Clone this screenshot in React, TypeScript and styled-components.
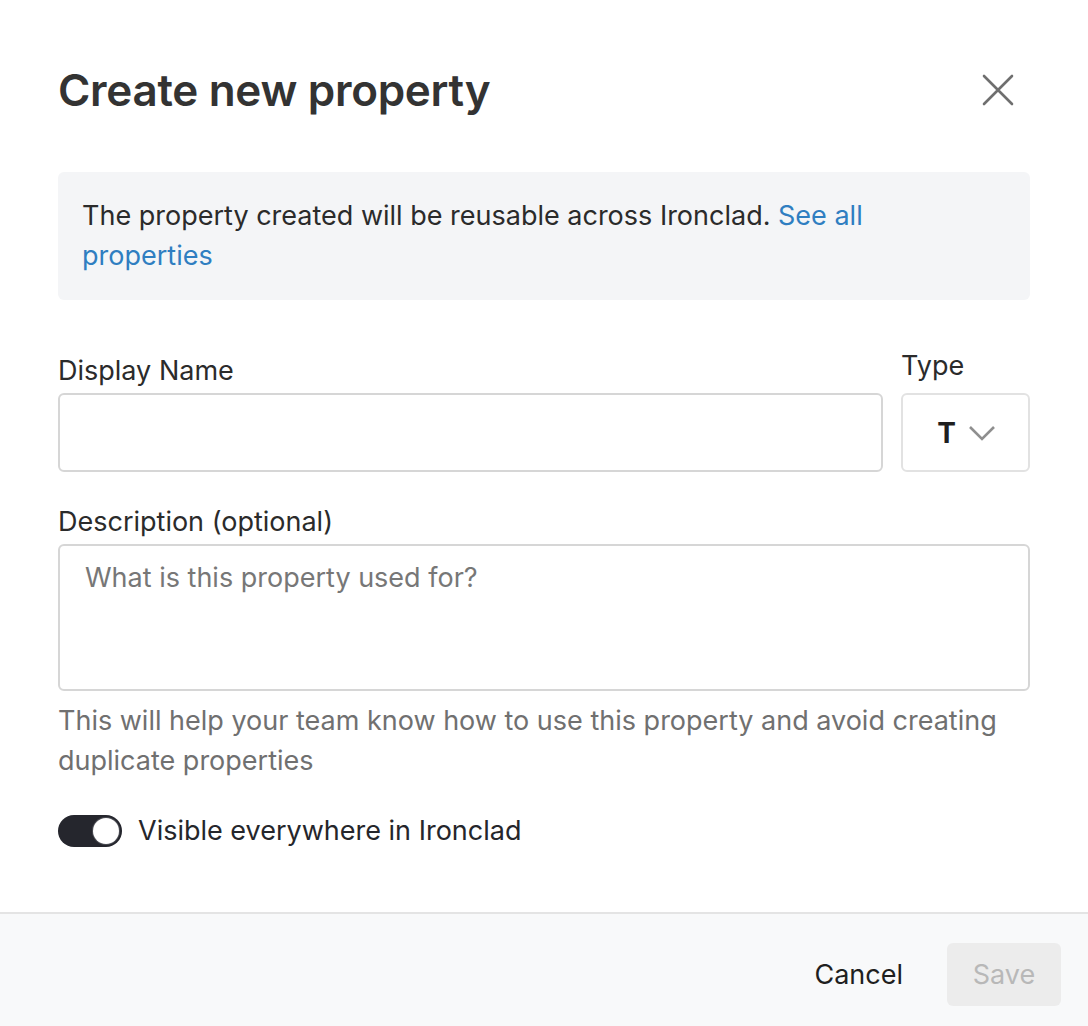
import React, { useState } from 'react';
import styled, { createGlobalStyle } from 'styled-components';

const GlobalStyle = createGlobalStyle`
  html, body {
    margin: 0;
    padding: 0;
    background: #ffffff;
  }
  body {
    font-family: Inter, "Noto Sans", "Liberation Sans", sans-serif;
    color: #2b2b2b;
    -webkit-font-smoothing: antialiased;
  }
  * {
    box-sizing: border-box;
  }
`;

const App = () => {
  const [visible, setVisible] = useState(true);

  return (
    <>
      <GlobalStyle />
      <Modal>
        <Body>
          <Header>
            <Title>Create new property</Title>
            <CloseButton aria-label="Close">
              <svg width="32" height="32" viewBox="0 0 32 32">
                <path d="M2 2 L30 30 M30 2 L2 30" stroke="#6f6f6f" strokeWidth="2.6" strokeLinecap="round" />
              </svg>
            </CloseButton>
          </Header>

          <InfoBox>
            The property created will be reusable across Ironclad. <InfoLink href="#">See all properties</InfoLink>
          </InfoBox>

          <FieldRow>
            <Field $grow>
              <Label>Display Name</Label>
              <TextInput />
            </Field>
            <Field>
              <Label $raised>Type</Label>
              <TypeSelect>
                <TypeGlyph>T</TypeGlyph>
                <svg width="28" height="16" viewBox="0 0 28 16">
                  <path d="M2 2 L14 14 L26 2" stroke="#8f8f8f" strokeWidth="2.6" fill="none" />
                </svg>
              </TypeSelect>
            </Field>
          </FieldRow>

          <DescriptionField>
            <Label>Description (optional)</Label>
            <TextArea placeholder="What is this property used for?" />
            <Hint>This will help your team know how to use this property and avoid creating duplicate properties</Hint>
          </DescriptionField>

          <ToggleRow>
            <Switch $on={visible} onClick={() => setVisible(!visible)} aria-pressed={visible}>
              <Knob $on={visible} />
            </Switch>
            <ToggleLabel>Visible everywhere in Ironclad</ToggleLabel>
          </ToggleRow>
        </Body>

        <Footer>
          <CancelButton>Cancel</CancelButton>
          <SaveButton disabled>Save</SaveButton>
        </Footer>
      </Modal>
    </>
  );
};

export default App;

const Modal = styled.div`
  width: 1088px;
  height: 1026px;
  display: flex;
  flex-direction: column;
  background: #ffffff;
`;

const Body = styled.div`
  flex: 1;
  padding: 62px 58px 0 58px;
  display: flex;
  flex-direction: column;
`;

const Header = styled.div`
  display: flex;
  justify-content: space-between;
  align-items: center;
`;

const Title = styled.h1`
  margin: 0;
  font-size: 44px;
  line-height: 56px;
  font-weight: 600;
  color: #333333;
  letter-spacing: -0.3px;
`;

const CloseButton = styled.button`
  border: none;
  background: none;
  padding: 0;
  margin-right: 16px;
  width: 32px;
  height: 32px;
  cursor: pointer;
  display: flex;
`;

const InfoBox = styled.div`
  margin-top: 54px;
  background: #f4f5f7;
  border-radius: 6px;
  padding: 24px 150px 24px 24px;
  font-size: 27px;
  line-height: 40px;
  color: #2b2b2b;
`;

const InfoLink = styled.a`
  color: #2f7ec1;
  text-decoration: none;
`;

const FieldRow = styled.div`
  margin-top: 51px;
  display: flex;
  gap: 18px;
`;

const Field = styled.div<{ $grow?: boolean }>`
  flex: ${(p) => (p.$grow ? 1 : 'none')};
  display: flex;
  flex-direction: column;
`;

const DescriptionField = styled(Field)`
  margin-top: 30px;
`;

const Label = styled.label<{ $raised?: boolean }>`
  font-size: 27px;
  line-height: 40px;
  color: #2b2b2b;
  margin-bottom: ${(p) => (p.$raised ? '7px' : '2px')};
  margin-top: ${(p) => (p.$raised ? '-5px' : '0')};
`;

const TextInput = styled.input`
  height: 79px;
  border: 2px solid #d6d6d6;
  border-radius: 6px;
  font-size: 27px;
  padding: 0 24px;
  font-family: inherit;
  outline: none;
`;

const TypeSelect = styled.div`
  width: 129px;
  height: 79px;
  border: 2px solid #e2e2e2;
  border-radius: 6px;
  display: flex;
  align-items: center;
  justify-content: center;
  gap: 12px;
  padding-left: 2px;
`;

const TypeGlyph = styled.span`
  font-size: 28px;
  font-weight: 700;
  color: #1f1f1f;
`;

const TextArea = styled.textarea`
  height: 147px;
  border: 2px solid #d6d6d6;
  border-radius: 6px;
  font-size: 27px;
  line-height: 40px;
  padding: 12px 25px;
  font-family: inherit;
  color: #2b2b2b;
  resize: none;
  outline: none;
  &::placeholder {
    color: #777777;
  }
`;

const Hint = styled.p`
  margin: 10px 0 0 0;
  font-size: 27px;
  line-height: 40px;
  color: #707070;
  padding-right: 10px;
`;

const ToggleRow = styled.div`
  margin-top: 30px;
  display: flex;
  align-items: center;
  gap: 16px;
`;

const Switch = styled.button<{ $on: boolean }>`
  width: 64px;
  height: 32px;
  border-radius: 16px;
  border: none;
  padding: 0;
  background: ${(p) => (p.$on ? '#25262d' : '#d5d5d5')};
  position: relative;
  cursor: pointer;
`;

const Knob = styled.span<{ $on: boolean }>`
  position: absolute;
  top: 3px;
  left: ${(p) => (p.$on ? '35px' : '3px')};
  width: 26px;
  height: 26px;
  border-radius: 50%;
  background: #ffffff;
  box-shadow: 0 0 0 1px #4a4b52;
`;

const ToggleLabel = styled.span`
  font-size: 27px;
  line-height: 40px;
  color: #25262b;
`;

const Footer = styled.div`
  height: 114px;
  border-top: 2px solid #e4e4e4;
  background: #f8f9fa;
  display: flex;
  justify-content: flex-end;
  align-items: center;
  gap: 24px;
  padding: 8px 27px 0 0;
`;

const CancelButton = styled.button`
  border: none;
  background: none;
  font-family: inherit;
  font-size: 27px;
  color: #1f1f1f;
  padding: 12px 20px;
  cursor: pointer;
`;

const SaveButton = styled.button`
  width: 114px;
  height: 63px;
  border: none;
  border-radius: 6px;
  background: #ececec;
  color: #b8b8b8;
  font-family: inherit;
  font-size: 27px;
`;
